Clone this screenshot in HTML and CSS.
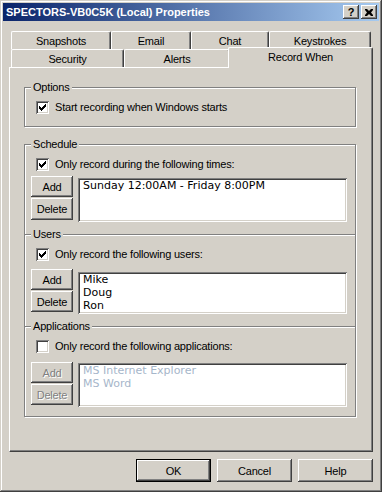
FILE: index.html
```html
<!DOCTYPE html>
<html lang="en">
<head>
    <meta charset="UTF-8">
    <title>SPECTORS-VB0C5K (Local) Properties</title>
    <link rel="stylesheet" href="styles.css">
</head>
<body>
    <div class="window">
        <div class="titlebar">
            <span class="title">SPECTORS-VB0C5K (Local) Properties</span>
            <div class="title-buttons">
                <span class="tbtn">?</span>
                <span class="tbtn">
                    <svg width="8" height="7" viewBox="0 0 8 7"><path d="M0 0h2l2 2 2-2h2v1L6 3.5 8 6v1H6L4 5 2 7H0V6l2-2.5L0 1z" fill="#000"/></svg>
                </span>
            </div>
        </div>

        <div class="tabs">
            <div class="tab-row">
                <div class="tab tab-snapshots">Snapshots</div>
                <div class="tab tab-email">Email</div>
                <div class="tab tab-chat">Chat</div>
                <div class="tab tab-keys">Keystrokes</div>
            </div>
            <div class="tab-row">
                <div class="tab tab-security">Security</div>
                <div class="tab tab-alerts">Alerts</div>
                <div class="tab tab-record selected">Record When</div>
            </div>
        </div>

        <div class="panel">
            <div class="group options">
                <div class="legend">Options</div>
                <div class="check-row">
                    <span class="checkbox"><svg width="13" height="13" viewBox="0 0 13 13"><path d="M3 5h1v1h1v1h1v-1h1v-1h1v-1h1v-1h1v3h-1v1h-1v1h-1v1h-1v1h-1v-1h-1v-1h-1z" fill="#000"/></svg></span>
                    <span>Start recording when Windows starts</span>
                </div>
            </div>

            <div class="group schedule open-bottom">
                <div class="legend">Schedule</div>
                <div class="check-row">
                    <span class="checkbox"><svg width="13" height="13" viewBox="0 0 13 13"><path d="M3 5h1v1h1v1h1v-1h1v-1h1v-1h1v-1h1v3h-1v1h-1v1h-1v1h-1v1h-1v-1h-1v-1h-1z" fill="#000"/></svg></span>
                    <span>Only record during the following times:</span>
                </div>
                <div class="list-row">
                    <div class="btn-col">
                        <div class="small-btn">Add</div>
                        <div class="small-btn tall">Delete</div>
                    </div>
                    <div class="listbox">
                        <div>Sunday 12:00AM - Friday 8:00PM</div>
                    </div>
                </div>
            </div>

            <div class="group users open-bottom">
                <div class="legend">Users</div>
                <div class="check-row">
                    <span class="checkbox"><svg width="13" height="13" viewBox="0 0 13 13"><path d="M3 5h1v1h1v1h1v-1h1v-1h1v-1h1v-1h1v3h-1v1h-1v1h-1v1h-1v1h-1v-1h-1v-1h-1z" fill="#000"/></svg></span>
                    <span>Only record the following users:</span>
                </div>
                <div class="list-row">
                    <div class="btn-col">
                        <div class="small-btn">Add</div>
                        <div class="small-btn">Delete</div>
                    </div>
                    <div class="listbox">
                        <div>Mike</div>
                        <div>Doug</div>
                        <div>Ron</div>
                    </div>
                </div>
            </div>

            <div class="group apps">
                <div class="legend">Applications</div>
                <div class="check-row">
                    <span class="checkbox"></span>
                    <span>Only record the following applications:</span>
                </div>
                <div class="list-row">
                    <div class="btn-col">
                        <div class="small-btn disabled">Add</div>
                        <div class="small-btn disabled">Delete</div>
                    </div>
                    <div class="listbox disabled">
                        <div>MS Internet Explorer</div>
                        <div>MS Word</div>
                    </div>
                </div>
            </div>
        </div>

        <div class="footer">
            <div class="btn default">OK</div>
            <div class="btn">Cancel</div>
            <div class="btn">Help</div>
        </div>
    </div>
</body>
</html>
```

FILE: styles.css
```css
:root {
    --face: #d4d0c8;
    --shadow: #808080;
    --dark: #404040;
    --light: #ffffff;
}

* {
    margin: 0;
    padding: 0;
    box-sizing: border-box;
}

body {
    font-family: 'Liberation Sans', Arial, sans-serif;
    font-size: 11px;
    letter-spacing: -0.2px;
    color: #000;
    background-color: var(--face);
}

.window {
    width: 382px;
    height: 492px;
    padding: 3px;
    background-color: var(--face);
    box-shadow: inset -1px -1px var(--dark), inset 1px 1px var(--face),
                inset -2px -2px var(--shadow), inset 2px 2px var(--light);
}

/* title bar */
.titlebar {
    height: 18px;
    display: flex;
    align-items: center;
    padding: 0 2px 0 3px;
    background: linear-gradient(to right, #0a246a, #a6caf0);
    color: #fff;
    font-weight: bold;
    letter-spacing: 0;
}

.title {
    flex: 1;
    white-space: nowrap;
}

.title-buttons {
    display: flex;
    gap: 2px;
}

.tbtn {
    width: 16px;
    height: 14px;
    display: flex;
    align-items: center;
    justify-content: center;
    background-color: var(--face);
    color: #000;
    font-size: 11px;
    line-height: 1;
    box-shadow: inset -1px -1px var(--dark), inset 1px 1px var(--light),
                inset -2px -2px var(--shadow);
}

/* tabs */
.tabs {
    margin: 10px 8px 0;
}

.tab-row {
    display: flex;
    align-items: flex-end;
    height: 18px;
}

.tab {
    height: 18px;
    display: flex;
    align-items: center;
    justify-content: center;
    background-color: var(--face);
    border-top: 1px solid var(--light);
    border-left: 1px solid var(--light);
    border-right: 1px solid var(--dark);
    border-radius: 2px 2px 0 0;
    box-shadow: inset -1px 0 var(--shadow);
    white-space: nowrap;
}

.tab-snapshots { width: 100px; }
.tab-email { width: 80px; }
.tab-chat { width: 78px; }
.tab-keys { width: 102px; }
.tab-security { width: 113px; }
.tab-alerts { width: 106px; }
.tab-record { width: 141px; }

.tab.selected {
    position: relative;
    z-index: 1;
    width: 145px;
    height: 21px;
    margin: 0 -2px -1px;
    padding-bottom: 3px;
}

/* property page */
.panel {
    height: 385px;
    margin: 0 6px;
    padding: 19px 16px 0 14px;
    border-top: 1px solid var(--light);
    border-left: 1px solid var(--light);
    border-right: 1px solid var(--dark);
    border-bottom: 1px solid var(--dark);
    box-shadow: inset -1px -1px var(--shadow);
}

.group {
    border: 1px solid var(--shadow);
    box-shadow: inset 1px 1px var(--light), 1px 1px var(--light);
    padding: 0 8px 12px 6px;
}

.group.open-bottom {
    border-bottom: none;
}

.legend {
    display: table;
    height: 13px;
    line-height: 13px;
    margin-top: -7px;
    padding: 0 2px;
    background-color: var(--face);
}

.options {
    margin-bottom: 17px;
}

.check-row {
    display: flex;
    align-items: center;
    gap: 6px;
    height: 13px;
    margin: 7px 0 0 5px;
    line-height: 13px;
    white-space: nowrap;
}

.checkbox {
    width: 13px;
    height: 13px;
    flex-shrink: 0;
    background-color: #fff;
    box-shadow: inset 1px 1px var(--shadow), inset -1px -1px var(--light),
                inset 2px 2px var(--dark), inset -2px -2px var(--face);
}

.checkbox svg {
    display: block;
}

.list-row {
    display: flex;
    gap: 5px;
}

.btn-col {
    width: 42px;
    display: flex;
    flex-direction: column;
    gap: 1px;
}

.small-btn {
    height: 21px;
    display: flex;
    align-items: center;
    justify-content: center;
    box-shadow: inset -1px -1px var(--dark), inset 1px 1px var(--light),
                inset -2px -2px var(--shadow);
}

.small-btn.tall {
    height: 22px;
}

.small-btn.disabled {
    color: var(--shadow);
    text-shadow: 1px 1px var(--light);
}

.listbox {
    flex: 1;
    padding: 1px 5px;
    background-color: #fff;
    font-family: 'DejaVu Sans', sans-serif;
    font-size: 11px;
    letter-spacing: 0;
    line-height: 13px;
    white-space: nowrap;
    overflow: hidden;
    box-shadow: inset 1px 1px var(--shadow), inset -1px -1px var(--light),
                inset 2px 2px var(--dark), inset -2px -2px var(--face);
}

.listbox.disabled {
    color: #a6b6ca;
}

.schedule .list-row { margin-top: 5px; }
.schedule .listbox { margin-top: 2px; height: 44px; }

.users .list-row { margin-top: 8px; }
.users .listbox { margin-top: 3px; height: 42px; }

.apps {
    padding-bottom: 9px;
}
.apps .list-row { margin-top: 9px; }
.apps .listbox { margin-top: 1px; height: 44px; }

/* dialog buttons */
.footer {
    display: flex;
    justify-content: flex-end;
    gap: 6px;
    margin-top: 7px;
    padding-right: 6px;
}

.btn {
    width: 75px;
    height: 23px;
    display: flex;
    align-items: center;
    justify-content: center;
    box-shadow: inset -1px -1px var(--dark), inset 1px 1px var(--light),
                inset -2px -2px var(--shadow);
}

.btn.default {
    border: 1px solid #000;
}
```
